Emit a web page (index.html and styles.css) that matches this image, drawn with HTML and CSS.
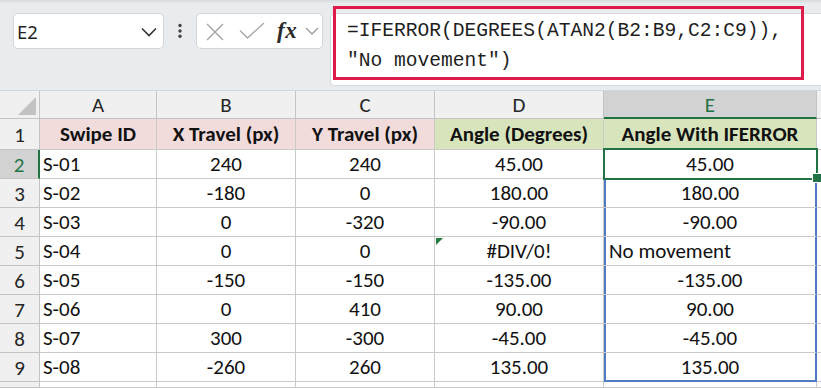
FILE: index.html
```html
<!DOCTYPE html>
<html>
<head>
<meta charset="utf-8">
<link rel="stylesheet" href="styles.css">
</head>
<body>
<div class="fbar">
  <div class="namebox">
    <span class="ref">E2</span>
    <svg width="16" height="10" viewBox="0 0 16 10"><polyline points="1,1.5 8,8.5 15,1.5" fill="none" stroke="#333" stroke-width="1.6"/></svg>
  </div>
  <div class="dots">
    <svg width="6" height="16" viewBox="0 0 6 16"><circle cx="3" cy="2.5" r="1.7" fill="#444"/><circle cx="3" cy="8" r="1.7" fill="#444"/><circle cx="3" cy="13.3" r="1.7" fill="#444"/></svg>
  </div>
  <div class="fnbox">
    <svg class="ic-x" width="18" height="18" viewBox="0 0 18 18"><path d="M1 1 L17 17 M17 1 L1 17" stroke="#a3a3a3" stroke-width="1.4" fill="none"/></svg>
    <svg class="ic-ok" width="26" height="18" viewBox="0 0 26 18"><polyline points="1,8.5 8.5,16 25,1" fill="none" stroke="#a8a8a8" stroke-width="1.4"/></svg>
    <span class="fx">fx</span>
    <svg class="ic-dd" width="14" height="8" viewBox="0 0 14 8"><polyline points="1,1 7,7 13,1" fill="none" stroke="#9a9a9a" stroke-width="1.3"/></svg>
  </div>
  <div class="formula">
    <div class="ftext">=IFERROR(DEGREES(ATAN2(B2:B9,C2:C9)),<br>"No movement")</div>
    <div class="hl"></div>
  </div>
</div>

<div class="sheet">
  <div class="c h corner"></div>
  <div class="c h">A</div>
  <div class="c h">B</div>
  <div class="c h">C</div>
  <div class="c h">D</div>
  <div class="c h hsel">E</div>
  <div class="c h"></div>

  <div class="c h">1</div>
  <div class="c pink b">Swipe ID</div>
  <div class="c pink b">X Travel (px)</div>
  <div class="c pink b">Y Travel (px)</div>
  <div class="c green b">Angle (Degrees)</div>
  <div class="c green b">Angle With IFERROR</div>
  <div class="c"></div>

  <div class="c h rsel">2</div>
  <div class="c l">S-01</div>
  <div class="c">240</div>
  <div class="c">240</div>
  <div class="c">45.00</div>
  <div class="c sel">45.00</div>
  <div class="c"></div>

  <div class="c h">3</div>
  <div class="c l">S-02</div>
  <div class="c">-180</div>
  <div class="c">0</div>
  <div class="c">180.00</div>
  <div class="c rng">180.00</div>
  <div class="c"></div>

  <div class="c h">4</div>
  <div class="c l">S-03</div>
  <div class="c">0</div>
  <div class="c">-320</div>
  <div class="c">-90.00</div>
  <div class="c rng">-90.00</div>
  <div class="c"></div>

  <div class="c h">5</div>
  <div class="c l">S-04</div>
  <div class="c">0</div>
  <div class="c">0</div>
  <div class="c err">#DIV/0!</div>
  <div class="c rng l txt">No movement</div>
  <div class="c"></div>

  <div class="c h">6</div>
  <div class="c l">S-05</div>
  <div class="c">-150</div>
  <div class="c">-150</div>
  <div class="c">-135.00</div>
  <div class="c rng">-135.00</div>
  <div class="c"></div>

  <div class="c h">7</div>
  <div class="c l">S-06</div>
  <div class="c">0</div>
  <div class="c">410</div>
  <div class="c">90.00</div>
  <div class="c rng">90.00</div>
  <div class="c"></div>

  <div class="c h">8</div>
  <div class="c l">S-07</div>
  <div class="c">300</div>
  <div class="c">-300</div>
  <div class="c">-45.00</div>
  <div class="c rng">-45.00</div>
  <div class="c"></div>

  <div class="c h">9</div>
  <div class="c l">S-08</div>
  <div class="c">-260</div>
  <div class="c">260</div>
  <div class="c">135.00</div>
  <div class="c rng last">135.00</div>
  <div class="c"></div>

  <div class="c h"></div>
  <div class="c"></div>
  <div class="c"></div>
  <div class="c"></div>
  <div class="c"></div>
  <div class="c"></div>
  <div class="c"></div>
</div>
</body>
</html>
```

FILE: styles.css
```css
* { box-sizing: border-box; }

html, body {
  margin: 0;
  padding: 0;
}

body {
  width: 821px;
  height: 388px;
  overflow: hidden;
  background: #ffffff;
  font-family: Calibri, Carlito, Lato, "Liberation Sans", sans-serif;
  color: #111;
}

/* ---------- formula bar ---------- */
.fbar {
  height: 90px;
  display: flex;
  align-items: flex-start;
  padding: 13px 0 0 13px;
  background: linear-gradient(#d8dbde 0, #e6e9ec 3px, #e9ecef 5px);
}

.namebox {
  width: 151px;
  height: 36px;
  background: #fff;
  border: 1px solid #d3d6d9;
  border-radius: 5px;
  display: flex;
  align-items: center;
  justify-content: space-between;
  padding: 0 6px 0 3px;
  font-family: "Noto Sans", "Open Sans", sans-serif;
  font-size: 18.5px;
  color: #1f1f1f;
}

.namebox svg { margin-top: 1px; }

.dots {
  width: 32px;
  height: 36px;
  display: flex;
  align-items: center;
  justify-content: center;
}

.fnbox {
  width: 127px;
  height: 36px;
  background: #fff;
  border: 1px solid #d3d6d9;
  border-radius: 5px;
  display: flex;
  align-items: center;
  padding-left: 9px;
}

.ic-x { margin-top: 2px; }
.ic-ok { margin-left: 15px; margin-top: 0; }

.fx {
  margin-left: 12px;
  font-family: "Liberation Serif", "DejaVu Serif", serif;
  font-style: italic;
  font-weight: 700;
  font-size: 23px;
  line-height: 1;
  color: #2b2b2b;
  letter-spacing: 0.5px;
  margin-top: -1px;
}

.ic-dd { margin-left: 8px; }

.formula {
  flex: 1;
  margin-left: 7px;
  height: 73px;
  background: #fff;
  border: 1px solid #d6d9dc;
  border-right: none;
  border-radius: 5px 0 0 5px;
  position: relative;
  padding: 2px 0 0 16px;
}

.ftext {
  font-family: "Liberation Mono", "DejaVu Sans Mono", monospace;
  font-size: 19.6px;
  line-height: 30px;
  color: #1e1e1e;
  white-space: nowrap;
}

.hl {
  position: absolute;
  left: 2px;
  top: -8px;
  width: 471px;
  height: 74px;
  border: 3px solid #e11a4c;
  pointer-events: none;
}

/* ---------- sheet ---------- */
.sheet {
  display: grid;
  grid-template-columns: 40px 117px 139px 139px 169px 213px 1fr;
  grid-template-rows: 28px 31px 29px 29px 29px 29px 29px 29px 29px 29px 1fr;
  height: 298px;
  border-top: 1px solid #d4d7da;
}

.c {
  border-right: 1px solid #cacaca;
  border-bottom: 1px solid #cacaca;
  display: flex;
  align-items: center;
  justify-content: center;
  white-space: nowrap;
  font-size: 21px;
  padding: 0 3px;
  position: relative;
  color: #111;
}

.c.l { justify-content: flex-start; }
.c.txt { padding-left: 5px; }

.h {
  background: #f0f0f0;
  border-right-color: #c4c4c4;
  border-bottom-color: #c4c4c4;
  color: #262626;
  padding-top: 1px;
}

.corner::after {
  content: "";
  position: absolute;
  right: 3px;
  bottom: 3px;
  border-left: 18px solid transparent;
  border-bottom: 18px solid #c2c2c2;
}

.hsel {
  background: #d2d2d2;
  color: #217346;
  border-bottom: 2px solid #217346;
}

.rsel {
  background: #d2d2d2;
  color: #217346;
  border-right: 2px solid #217346;
}

.pink { background: #f2dcdb; }
.green { background: #d8e4bc; }
.b { font-weight: 700; }

.sel::after {
  content: "";
  position: absolute;
  left: -1px;
  top: -2px;
  right: -2px;
  bottom: -2px;
  border: 2px solid #217346;
  z-index: 2;
}

.sel::before {
  content: "";
  position: absolute;
  right: -6px;
  bottom: -5px;
  width: 8px;
  height: 8px;
  background: #217346;
  border: 1px solid #fff;
  z-index: 3;
}

.rng {
  border-right-color: #4f7bc5;
  box-shadow: inset 2px 0 0 #4f7bc5, inset -1px 0 0 #4f7bc5;
}

.rng.last {
  border-bottom-color: #4f7bc5;
  box-shadow: inset 2px 0 0 #4f7bc5, inset -1px 0 0 #4f7bc5, inset 0 -1px 0 #4f7bc5;
}

.err::before {
  content: "";
  position: absolute;
  left: 1px;
  top: 1px;
  border-top: 7px solid #1f7a3c;
  border-right: 7px solid transparent;
}
```
